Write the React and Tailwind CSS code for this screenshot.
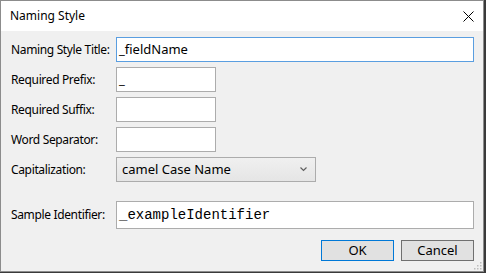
import { useState } from "react";

const font = "font-['Segoe_UI','Noto_Sans','Open_Sans',sans-serif]";

const Field = ({ label, width = "w-[358px]", value = "", mono = false, focused = false, height = "h-[25px]" }) => (
  <div className="flex items-center">
    <label className="w-[105px] shrink-0 whitespace-nowrap text-[12px] tracking-[-0.35px] text-black">{label}</label>
    <div
      className={`${width} ${height} bg-white border flex items-center px-[2px] ${
        focused ? "border-[#5a9ee0]" : "border-[#acacac]"
      }`}
    >
      <span
        className={
          mono
            ? "font-['Liberation_Mono',monospace] text-[14px] text-black"
            : "text-[13px] text-black"
        }
      >
        {value}
      </span>
    </div>
  </div>
);

export default function App() {
  const [cap] = useState("camel Case Name");

  return (
    <div className={`w-[486px] h-[273px] bg-[#3a3a3a] ${font}`}>
      <div className="w-[484px] h-[272px] border border-[#8c8c8c] bg-[#f0f0f0] flex flex-col">
        {/* Title bar */}
        <div className="h-[30px] bg-white flex items-center justify-between pl-[9px] pr-[8px] shrink-0">
          <span className="text-[12px] text-black">Naming Style</span>
          <svg width="11" height="11" viewBox="0 0 11 11" className="mr-[1px]">
            <path d="M0.5 0.5 L10.5 10.5 M10.5 0.5 L0.5 10.5" stroke="#000" strokeWidth="1" />
          </svg>
        </div>

        {/* Body */}
        <div className="flex-1 relative pl-[10px] pt-[6px] pr-[9px]">
          <div className="flex flex-col gap-[5px]">
            <Field label="Naming Style Title:" value="_fieldName" focused />
            <Field label="Required Prefix:" width="w-[100px]" value="_" />
            <Field label="Required Suffix:" width="w-[100px]" />
            <Field label="Word Separator:" width="w-[100px]" />
            <div className="flex items-center">
              <label className="w-[105px] shrink-0 whitespace-nowrap text-[12px] tracking-[-0.35px] text-black">Capitalization:</label>
              <div className="w-[200px] h-[25px] border border-[#acacac] bg-[linear-gradient(#f0f0f0,#e5e5e5)] flex items-center justify-between pl-[5px] pr-[8px]">
                <span className="text-[13px] text-black">{cap}</span>
                <svg width="7" height="5" viewBox="0 0 7 5">
                  <path d="M0.5 0.5 L3.5 3.5 L6.5 0.5" stroke="#606060" strokeWidth="1.2" fill="none" />
                </svg>
              </div>
            </div>
          </div>

          <div className="mt-[19px]">
            <Field label="Sample Identifier:" value="_exampleIdentifier" mono height="h-[28px]" />
          </div>

          <div className="flex justify-end gap-[7px] mt-[11px]">
            <button className="w-[73px] h-[21px] border border-[#0078d7] bg-[#e1e1e1] text-[13px] text-black leading-none">
              OK
            </button>
            <button className="w-[73px] h-[21px] border border-[#707070] bg-[#e1e1e1] text-[13px] text-black leading-none">
              Cancel
            </button>
          </div>

          {/* resize grip */}
          <svg width="9" height="9" viewBox="0 0 9 9" className="absolute right-[1px] bottom-[1px]">
            {[
              [7, 1], [7, 4], [4, 4], [7, 7], [4, 7], [1, 7],
            ].map(([x, y]) => (
              <rect key={`${x}-${y}`} x={x} y={y} width="1.5" height="1.5" fill="#bcbcbc" />
            ))}
          </svg>
        </div>
      </div>
    </div>
  );
}
